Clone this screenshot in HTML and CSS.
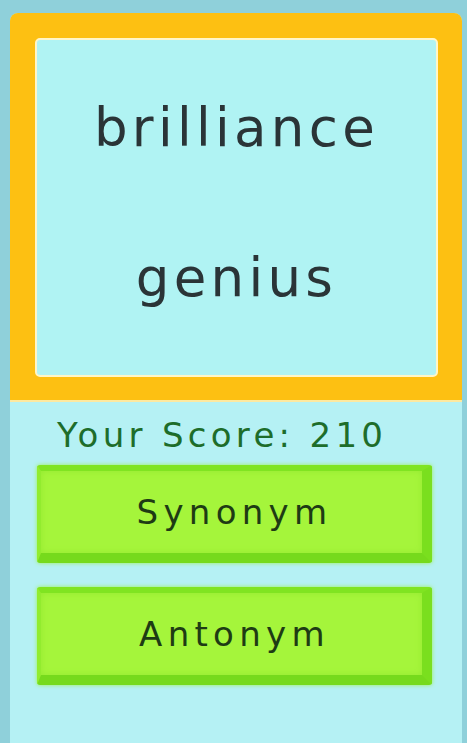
FILE: index.html
```html
<!DOCTYPE html>
<html lang="en">
<head>
    <meta charset="UTF-8">
    <meta name="viewport" content="width=device-width, initial-scale=1.0">
    <title>Synonym or Antonym</title>
    <link rel="stylesheet" href="styles.css">
</head>
<body>
    <div class="card">
        <div class="word-panel">
            <div class="word-box">
                <div class="word">brilliance</div>
                <div class="word">genius</div>
            </div>
        </div>
        <div class="play-panel">
            <div class="score">Your Score: 210</div>
            <button class="answer">Synonym</button>
            <button class="answer">Antonym</button>
        </div>
    </div>
</body>
</html>
```

FILE: styles.css
```css
body {
    margin: 0;
    padding: 13px 5px 0 10px;
    background-color: #8fd0da;
    font-family: "DejaVu Sans", sans-serif;
    height: 743px;
    box-sizing: border-box;
    overflow: hidden;
}
.card {
    border-radius: 8px 8px 0 0;
    overflow: hidden;
    height: 730px;
    background: #b5f1f4;
    display: flex;
    flex-direction: column;
}
.word-panel {
    background: #fdc012;
    padding: 25px 24px 23px 25px;
    border-bottom: 2px solid #fde9a0;
}
.word-box {
    background: #b0f3f3;
    border: 2px solid #fff6c8;
    border-radius: 5px;
    height: 325px;
    padding-bottom: 10px;
    display: flex;
    flex-direction: column;
    justify-content: center;
    gap: 50px;
}
.word {
    line-height: 100px;
    font-size: 53px;
    letter-spacing: 4.3px;
    color: #2a3437;
    text-align: center;
}
.play-panel {
    flex: 1;
    padding: 12px 30px 0 27px;
    display: flex;
    flex-direction: column;
    gap: 24px;
}
.score {
    font-size: 34px;
    letter-spacing: 4.3px;
    color: #1d6d2a;
    padding-left: 20px;
    line-height: 42px;
    margin-bottom: -15px;
}
.answer {
    height: 98px;
    box-sizing: border-box;
    border-style: solid;
    border-width: 6px 10px 10px 4px;
    border-color: #80e421 #7adf1e #76da1c #92ec2e;
    background: #a5f53b;
    box-shadow: 0 0 4px #9ef050, inset 0 0 6px #94ea30;
    border-radius: 3px;
    font-family: "DejaVu Sans", sans-serif;
    font-size: 34px;
    letter-spacing: 5.3px;
    color: #1e3b14;
    padding: 0 0 0 6px;
}
```
